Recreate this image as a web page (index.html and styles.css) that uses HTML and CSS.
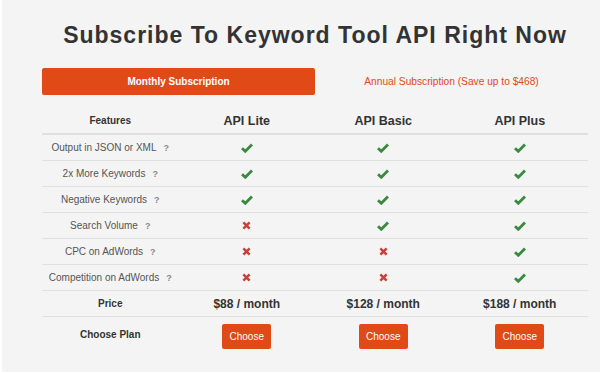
FILE: index.html
```html
<!DOCTYPE html>
<html>
<head>
<meta charset="utf-8">
<link rel="stylesheet" href="styles.css">
</head>
<body>
<div class="page">
  <h1 class="title">Subscribe To Keyword Tool API Right Now</h1>
  <div class="tabs">
    <div class="tab tab-active">Monthly Subscription</div>
    <div class="tab tab-link">Annual Subscription (Save up to $468)</div>
  </div>
  <div class="table">
    <div class="row head">
      <div class="cell feat-head">Features</div>
      <div class="cell plan">API Lite</div>
      <div class="cell plan">API Basic</div>
      <div class="cell plan">API Plus</div>
    </div>
    <div class="row">
      <div class="cell feat">Output in JSON or XML<span class="q">?</span></div>
      <div class="cell"><svg class="ok" viewBox="0 0 12 10"><path d="M1 5.2 L4.3 8.3 L11 1.6" /></svg></div>
      <div class="cell"><svg class="ok" viewBox="0 0 12 10"><path d="M1 5.2 L4.3 8.3 L11 1.6" /></svg></div>
      <div class="cell"><svg class="ok" viewBox="0 0 12 10"><path d="M1 5.2 L4.3 8.3 L11 1.6" /></svg></div>
    </div>
    <div class="row">
      <div class="cell feat">2x More Keywords<span class="q">?</span></div>
      <div class="cell"><svg class="ok" viewBox="0 0 12 10"><path d="M1 5.2 L4.3 8.3 L11 1.6" /></svg></div>
      <div class="cell"><svg class="ok" viewBox="0 0 12 10"><path d="M1 5.2 L4.3 8.3 L11 1.6" /></svg></div>
      <div class="cell"><svg class="ok" viewBox="0 0 12 10"><path d="M1 5.2 L4.3 8.3 L11 1.6" /></svg></div>
    </div>
    <div class="row">
      <div class="cell feat">Negative Keywords<span class="q">?</span></div>
      <div class="cell"><svg class="ok" viewBox="0 0 12 10"><path d="M1 5.2 L4.3 8.3 L11 1.6" /></svg></div>
      <div class="cell"><svg class="ok" viewBox="0 0 12 10"><path d="M1 5.2 L4.3 8.3 L11 1.6" /></svg></div>
      <div class="cell"><svg class="ok" viewBox="0 0 12 10"><path d="M1 5.2 L4.3 8.3 L11 1.6" /></svg></div>
    </div>
    <div class="row">
      <div class="cell feat">Search Volume<span class="q">?</span></div>
      <div class="cell"><svg class="no" viewBox="0 0 10 10"><path d="M1.5 1.5 L8.5 8.5 M8.5 1.5 L1.5 8.5" /></svg></div>
      <div class="cell"><svg class="ok" viewBox="0 0 12 10"><path d="M1 5.2 L4.3 8.3 L11 1.6" /></svg></div>
      <div class="cell"><svg class="ok" viewBox="0 0 12 10"><path d="M1 5.2 L4.3 8.3 L11 1.6" /></svg></div>
    </div>
    <div class="row">
      <div class="cell feat">CPC on AdWords<span class="q">?</span></div>
      <div class="cell"><svg class="no" viewBox="0 0 10 10"><path d="M1.5 1.5 L8.5 8.5 M8.5 1.5 L1.5 8.5" /></svg></div>
      <div class="cell"><svg class="no" viewBox="0 0 10 10"><path d="M1.5 1.5 L8.5 8.5 M8.5 1.5 L1.5 8.5" /></svg></div>
      <div class="cell"><svg class="ok" viewBox="0 0 12 10"><path d="M1 5.2 L4.3 8.3 L11 1.6" /></svg></div>
    </div>
    <div class="row">
      <div class="cell feat">Competition on AdWords<span class="q">?</span></div>
      <div class="cell"><svg class="no" viewBox="0 0 10 10"><path d="M1.5 1.5 L8.5 8.5 M8.5 1.5 L1.5 8.5" /></svg></div>
      <div class="cell"><svg class="no" viewBox="0 0 10 10"><path d="M1.5 1.5 L8.5 8.5 M8.5 1.5 L1.5 8.5" /></svg></div>
      <div class="cell"><svg class="ok" viewBox="0 0 12 10"><path d="M1 5.2 L4.3 8.3 L11 1.6" /></svg></div>
    </div>
    <div class="row">
      <div class="cell feat-head">Price</div>
      <div class="cell price">$88 / month</div>
      <div class="cell price">$128 / month</div>
      <div class="cell price">$188 / month</div>
    </div>
    <div class="row last">
      <div class="cell feat-head">Choose Plan</div>
      <div class="cell"><span class="btn">Choose</span></div>
      <div class="cell"><span class="btn">Choose</span></div>
      <div class="cell"><span class="btn">Choose</span></div>
    </div>
  </div>
</div>
</body>
</html>
```

FILE: styles.css
```css
html, body {
  margin: 0;
  padding: 0;
  background: #ffffff;
}
body {
  font-family: "Liberation Sans", Arial, sans-serif;
  color: #333;
}
.page {
  margin-left: 2px;
  height: 372px;
  background: #f4f4f4;
  padding: 22px 12px 0 40px;
  box-sizing: border-box;
}
.title {
  margin: 0;
  font-size: 23px;
  line-height: 26px;
  letter-spacing: 1px;
  font-weight: bold;
  text-align: center;
  color: #333;
}
.tabs {
  margin-top: 20px;
  display: grid;
  grid-template-columns: 273px 273px;
}
.tab {
  height: 27px;
  display: flex;
  align-items: center;
  justify-content: center;
  font-size: 10.5px;
}
.tab-active {
  background: #e04a17;
  color: #fff;
  font-weight: bold;
  font-size: 10px;
  border-radius: 2px;
}
.tab-link {
  color: #e04a17;
  font-size: 10.2px;
}
.table {
  margin-top: 13px;
  width: 546px;
}
.row {
  display: grid;
  grid-template-columns: repeat(4, 1fr);
  height: 25px;
  border-bottom: 1px solid #e0e0e0;
}
.row.head {
  border-bottom: 2px solid #e0e0e0;
}
.row.last {
  border-bottom: none;
  height: 34px;
}
.cell {
  display: flex;
  align-items: center;
  justify-content: center;
}
.feat {
  font-size: 10px;
  color: #555;
}
.q {
  font-size: 9px;
  font-weight: bold;
  color: #8a8a8a;
  margin-left: 7px;
}
.feat-head {
  font-size: 10px;
  font-weight: bold;
  color: #333;
}
.plan {
  font-size: 12.5px;
  font-weight: bold;
  color: #333;
}
.price {
  font-size: 12px;
  font-weight: bold;
  color: #333;
}
.ok {
  width: 12px;
  height: 10px;
  fill: none;
  stroke: #3a8a3e;
  stroke-width: 2.8;
}
.no {
  width: 9px;
  height: 9px;
  fill: none;
  stroke: #c9423a;
  stroke-width: 2.8;
}
.btn {
  display: inline-flex;
  align-items: center;
  justify-content: center;
  width: 49px;
  height: 25px;
  background: #e04a17;
  color: #fff;
  font-size: 10px;
  border-radius: 2px;
  margin-top: 4px;
}
```
